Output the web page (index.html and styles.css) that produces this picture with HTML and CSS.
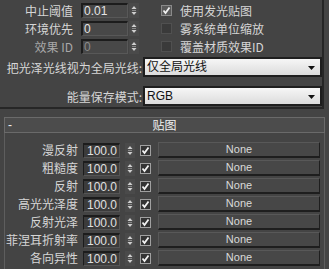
FILE: index.html
```html
<!DOCTYPE html>
<html>
<head>
<meta charset="utf-8">
<link rel="stylesheet" href="styles.css">
</head>
<body>
<div class="page">
  <div class="top">
    <div class="row">
      <span class="lbl">中止阈值</span>
      <span class="inp">0.01</span>
      <span class="spin"><svg width="10" height="15" viewBox="0 0 10 15"><path d="M5 3 L2.5 6 L7.5 6 Z" fill="#d0d0d0"/><path d="M3 7.5 H7" stroke="#8a8a8a" stroke-width="1"/><path d="M2.5 9 L7.5 9 L5 12 Z" fill="#d0d0d0"/></svg></span>
      <span class="chk on"><svg width="9" height="9" viewBox="0 0 9 9"><path d="M1.5 4.5 L3.5 7 L7.5 1.5" fill="none" stroke="#f2f2f2" stroke-width="1.8"/></svg></span>
      <span class="clbl">使用发光贴图</span>
    </div>
    <div class="row">
      <span class="lbl">环境优先</span>
      <span class="inp">0</span>
      <span class="spin"><svg width="10" height="15" viewBox="0 0 10 15"><path d="M5 3 L2.5 6 L7.5 6 Z" fill="#d0d0d0"/><path d="M3 7.5 H7" stroke="#8a8a8a" stroke-width="1"/><path d="M2.5 9 L7.5 9 L5 12 Z" fill="#d0d0d0"/></svg></span>
      <span class="chk"></span>
      <span class="clbl">雾系统单位缩放</span>
    </div>
    <div class="row">
      <span class="lbl dim">效果 ID</span>
      <span class="inp dim">0</span>
      <span class="spin"><svg width="10" height="15" viewBox="0 0 10 15"><path d="M5 3 L2.5 6 L7.5 6 Z" fill="#d0d0d0"/><path d="M3 7.5 H7" stroke="#8a8a8a" stroke-width="1"/><path d="M2.5 9 L7.5 9 L5 12 Z" fill="#d0d0d0"/></svg></span>
      <span class="chk"></span>
      <span class="clbl">覆盖材质效果ID</span>
    </div>
    <div class="drow first">
      <span class="dlbl">把光泽光线视为全局光线:</span>
      <span class="dd">仅全局光线<svg class="arr" width="7" height="4" viewBox="0 0 7 4"><path d="M0 0 H7 L3.5 4 Z" fill="#111"/></svg></span>
    </div>
    <div class="drow second">
      <span class="dlbl">能量保存模式:</span>
      <span class="dd">RGB<svg class="arr" width="7" height="4" viewBox="0 0 7 4"><path d="M0 0 H7 L3.5 4 Z" fill="#111"/></svg></span>
    </div>
  </div>

  <div class="rollout">
    <div class="rhead"><span class="minus">-</span><span class="rtitle">贴图</span></div>
    <div class="rbody">
      <div class="mrow"><span class="mlbl">漫反射</span><span class="minp">100.0</span><span class="spin"><svg width="10" height="15" viewBox="0 0 10 15"><path d="M5 3 L2.5 6 L7.5 6 Z" fill="#d0d0d0"/><path d="M3 7.5 H7" stroke="#8a8a8a" stroke-width="1"/><path d="M2.5 9 L7.5 9 L5 12 Z" fill="#d0d0d0"/></svg></span><span class="mchk"><svg width="9" height="9" viewBox="0 0 9 9"><path d="M1.5 4.5 L3.5 7 L7.5 1.5" fill="none" stroke="#f2f2f2" stroke-width="1.8"/></svg></span><span class="btn">None</span></div>
      <div class="mrow"><span class="mlbl">粗糙度</span><span class="minp">100.0</span><span class="spin"><svg width="10" height="15" viewBox="0 0 10 15"><path d="M5 3 L2.5 6 L7.5 6 Z" fill="#d0d0d0"/><path d="M3 7.5 H7" stroke="#8a8a8a" stroke-width="1"/><path d="M2.5 9 L7.5 9 L5 12 Z" fill="#d0d0d0"/></svg></span><span class="mchk"><svg width="9" height="9" viewBox="0 0 9 9"><path d="M1.5 4.5 L3.5 7 L7.5 1.5" fill="none" stroke="#f2f2f2" stroke-width="1.8"/></svg></span><span class="btn">None</span></div>
      <div class="mrow"><span class="mlbl">反射</span><span class="minp">100.0</span><span class="spin"><svg width="10" height="15" viewBox="0 0 10 15"><path d="M5 3 L2.5 6 L7.5 6 Z" fill="#d0d0d0"/><path d="M3 7.5 H7" stroke="#8a8a8a" stroke-width="1"/><path d="M2.5 9 L7.5 9 L5 12 Z" fill="#d0d0d0"/></svg></span><span class="mchk"><svg width="9" height="9" viewBox="0 0 9 9"><path d="M1.5 4.5 L3.5 7 L7.5 1.5" fill="none" stroke="#f2f2f2" stroke-width="1.8"/></svg></span><span class="btn">None</span></div>
      <div class="mrow"><span class="mlbl">高光光泽度</span><span class="minp">100.0</span><span class="spin"><svg width="10" height="15" viewBox="0 0 10 15"><path d="M5 3 L2.5 6 L7.5 6 Z" fill="#d0d0d0"/><path d="M3 7.5 H7" stroke="#8a8a8a" stroke-width="1"/><path d="M2.5 9 L7.5 9 L5 12 Z" fill="#d0d0d0"/></svg></span><span class="mchk"><svg width="9" height="9" viewBox="0 0 9 9"><path d="M1.5 4.5 L3.5 7 L7.5 1.5" fill="none" stroke="#f2f2f2" stroke-width="1.8"/></svg></span><span class="btn">None</span></div>
      <div class="mrow"><span class="mlbl">反射光泽</span><span class="minp">100.0</span><span class="spin"><svg width="10" height="15" viewBox="0 0 10 15"><path d="M5 3 L2.5 6 L7.5 6 Z" fill="#d0d0d0"/><path d="M3 7.5 H7" stroke="#8a8a8a" stroke-width="1"/><path d="M2.5 9 L7.5 9 L5 12 Z" fill="#d0d0d0"/></svg></span><span class="mchk"><svg width="9" height="9" viewBox="0 0 9 9"><path d="M1.5 4.5 L3.5 7 L7.5 1.5" fill="none" stroke="#f2f2f2" stroke-width="1.8"/></svg></span><span class="btn">None</span></div>
      <div class="mrow"><span class="mlbl">菲涅耳折射率</span><span class="minp">100.0</span><span class="spin"><svg width="10" height="15" viewBox="0 0 10 15"><path d="M5 3 L2.5 6 L7.5 6 Z" fill="#d0d0d0"/><path d="M3 7.5 H7" stroke="#8a8a8a" stroke-width="1"/><path d="M2.5 9 L7.5 9 L5 12 Z" fill="#d0d0d0"/></svg></span><span class="mchk"><svg width="9" height="9" viewBox="0 0 9 9"><path d="M1.5 4.5 L3.5 7 L7.5 1.5" fill="none" stroke="#f2f2f2" stroke-width="1.8"/></svg></span><span class="btn">None</span></div>
      <div class="mrow"><span class="mlbl">各向异性</span><span class="minp">100.0</span><span class="spin"><svg width="10" height="15" viewBox="0 0 10 15"><path d="M5 3 L2.5 6 L7.5 6 Z" fill="#d0d0d0"/><path d="M3 7.5 H7" stroke="#8a8a8a" stroke-width="1"/><path d="M2.5 9 L7.5 9 L5 12 Z" fill="#d0d0d0"/></svg></span><span class="mchk"><svg width="9" height="9" viewBox="0 0 9 9"><path d="M1.5 4.5 L3.5 7 L7.5 1.5" fill="none" stroke="#f2f2f2" stroke-width="1.8"/></svg></span><span class="btn">None</span></div>
    </div>
  </div>
</div>
</body>
</html>
```

FILE: styles.css
```css
html, body {
  margin: 0;
  padding: 0;
  background: #444444;
}
body {
  width: 329px;
  height: 269px;
  overflow: hidden;
  font-family: "Liberation Sans", "Noto Sans CJK SC", sans-serif;
  font-size: 12px;
  color: #d6d6d6;
}
.page {
  width: 329px;
  height: 269px;
  overflow: hidden;
}
.top {
  width: 322px;
  height: 107px;
  box-sizing: content-box;
  border-right: 2px solid #262626;
  border-bottom: 2px solid #262626;
  padding-top: 3px;
  box-sizing: border-box;
  width: 324px;
  height: 109px;
}
.row {
  display: flex;
  align-items: center;
  height: 15px;
  margin-bottom: 3px;
}
.lbl {
  width: 73px;
  text-align: right;
  margin-right: 8px;
  white-space: nowrap;
  line-height: 15px;
  font-family: "Noto Sans CJK SC", sans-serif;
}
.lbl.dim { color: #a8a8a8; }
.inp {
  width: 47px;
  height: 15px;
  box-sizing: border-box;
  background: #484848;
  border-top: 2px solid #1c1c1c;
  border-left: 2px solid #1c1c1c;
  border-right: 1px solid #585858;
  border-bottom: 1px solid #585858;
  padding-left: 1px;
  line-height: 12px;
  color: #e4e4e4;
}
.inp.dim { color: #8c8c8c; }
.spin {
  width: 10px;
  height: 15px;
  margin-left: 1px;
  display: block;
  background: #4a4a4a;
}
.spin svg { display: block; }
.chk {
  width: 11px;
  height: 11px;
  box-sizing: border-box;
  margin-left: 22px;
  background: #3a3a3a;
  border: 1px solid #505050;
  display: flex;
  align-items: center;
  justify-content: center;
}
.chk.on {
  background: #5a5a5a;
  border-color: #8a8a8a;
}
.chk svg { display: block; }
.clbl {
  margin-left: 8px;
  white-space: nowrap;
  font-family: "Noto Sans CJK SC", sans-serif;
  line-height: 15px;
}
.drow {
  display: flex;
  align-items: center;
}
.drow.first { margin-top: 0; height: 20px; }
.drow.second { margin-top: 9px; height: 20px; }
.dlbl {
  width: 142px;
  margin-right: 1px;
  text-align: right;
  white-space: nowrap;
  font-family: "Noto Sans CJK SC", sans-serif;
}
.dd {
  position: relative;
  width: 179px;
  height: 20px;
  box-sizing: border-box;
  border: 2px solid #1e1e1e;
  background: linear-gradient(#f6f6f6, #dcdcdc);
  color: #111;
  padding-left: 2px;
  line-height: 16px;
  font-family: "Liberation Sans", "Noto Sans CJK SC", sans-serif;
}
.arr {
  position: absolute;
  right: 5px;
  top: 7px;
}
.rollout {
  margin-top: 8px;
  margin-left: 4px;
  width: 321px;
  height: 160px;
  box-sizing: border-box;
  border-left: 1px solid #5e5e5e;
  border-right: 1px solid #5e5e5e;
}
.rhead {
  position: relative;
  height: 16px;
  box-sizing: border-box;
  margin-left: -1px;
  margin-right: -1px;
  border: 1px solid #6a6a6a;
  background: #4c4c4c;
  display: flex;
  align-items: center;
  justify-content: center;
  color: #f0f0f0;
  font-family: "Noto Sans CJK SC", sans-serif;
}
.minus {
  position: absolute;
  left: 3px;
  top: -1px;
  font-family: "Liberation Sans", sans-serif;
  font-size: 12px;
  line-height: 16px;
}
.rtitle { line-height: 14px; }
.rbody {
  padding-top: 9px;
}
.mrow {
  display: flex;
  align-items: center;
  height: 16px;
  margin-bottom: 2px;
}
.mlbl {
  width: 73px;
  text-align: right;
  margin-right: 5px;
  white-space: nowrap;
  font-family: "Noto Sans CJK SC", sans-serif;
  line-height: 16px;
}
.minp {
  width: 37px;
  height: 15px;
  box-sizing: border-box;
  background: #3b3b3b;
  border-top: 2px solid #1c1c1c;
  border-left: 1px solid #1c1c1c;
  border-right: 1px solid #555;
  border-bottom: 1px solid #555;
  padding-left: 3px;
  line-height: 12px;
  color: #e0e0e0;
}
.mrow .spin { margin-left: 5px; }
.mchk {
  margin-left: 5px;
  width: 11px;
  height: 11px;
  box-sizing: border-box;
  background: #333;
  border: 1px solid #a0a0a0;
  display: flex;
  align-items: center;
  justify-content: center;
}
.mchk svg { display: block; }
.btn {
  margin-left: 7px;
  width: 162px;
  height: 16px;
  box-sizing: border-box;
  background: #474747;
  border-top: 1px solid #585858;
  border-left: 1px solid #585858;
  border-right: 1px solid #1e1e1e;
  border-bottom: 2px solid #1e1e1e;
  text-align: center;
  font-size: 11px;
  line-height: 13px;
  color: #dadada;
}
```
